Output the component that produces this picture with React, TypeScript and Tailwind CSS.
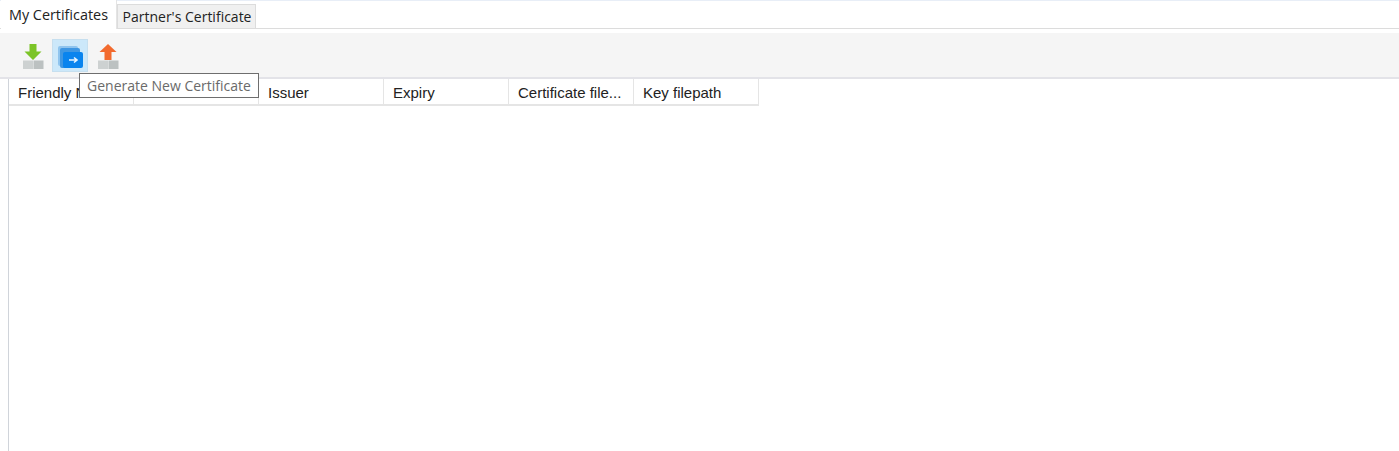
export default function App() {
  const heads = ["Friendly Name", "Domain", "Issuer", "Expiry", "Certificate file...", "Key filepath"];
  return (
    <div className="relative flex h-[451px] w-[1399px] flex-col overflow-hidden bg-white font-['Open_Sans',sans-serif]">
      <div className="h-px bg-[#e8eef7]" />
      <div className="flex h-[28px] items-end border-b border-[#dcdcdc] pl-[1px]">
        <div className="relative z-10 -mb-px flex h-[29px] w-[116px] items-center justify-center border-r border-[#e4e4e4] bg-white text-[14.4px] text-[#222]">
          My Certificates
        </div>
        <div className="flex h-[24px] w-[139px] items-center justify-center border border-b-0 border-[#dcdcdc] bg-[#f0f0f0] pl-[1px] text-[14px] text-[#222]">
          Partner's Certificate
        </div>
      </div>
      <div className="mt-[4px] flex h-[46px] items-start border-b-2 border-[#e3e3e8] bg-[#f5f5f5] pl-[15px] pt-[6px]">
        <button className="flex h-[33px] w-[36px] items-center justify-center">
          <svg width="24" height="30" viewBox="0 0 24 30">
            <path d="M8.500 3h7v7.500h5L12 19 3.500 10.500h5z" fill="#7cc427" />
            <rect x="2" y="19.500" width="10" height="8.500" fill="#cdd1d1" />
            <rect x="12.500" y="19.500" width="10" height="8.500" fill="#bcc1c1" />
          </svg>
        </button>
        <button className="ml-px flex h-[33px] w-[36px] items-center justify-center border border-[#c6dfef] bg-[#cce8fa]">
          <svg width="28" height="30" viewBox="0 0 28 30">
            <rect x="2" y="5" width="20" height="20" rx="2" fill="#8fc4ee" />
            <rect x="4" y="7" width="20" height="20" rx="2" fill="#3f97e3" />
            <rect x="7" y="11" width="20" height="16" rx="2" fill="#0a84ee" />
            <path d="M13 19h7M18 16.500l3 2.500-3 2.500" stroke="#e8f4ff" strokeWidth="1.600" fill="none" />
          </svg>
        </button>
        <button className="ml-px flex h-[33px] w-[38px] items-center justify-center">
          <svg width="24" height="30" viewBox="0 0 24 30">
            <path d="M12 3l8.500 8h-5v8h-7v-8h-5z" fill="#f26a2e" />
            <rect x="2" y="19.500" width="10" height="8.500" fill="#cdd1d1" />
            <rect x="12.500" y="19.500" width="10" height="8.500" fill="#bcc1c1" />
          </svg>
        </button>
      </div>
      <div className="ml-[8px] flex-1 border-l border-[#d0d4da]">
        <div className="flex h-[27px] w-[750px] border-b-2 border-[#e5e5e5] font-['Liberation_Sans',sans-serif] text-[15px] text-[#222]">
          {heads.map((h) => (
            <div key={h} className="flex w-[125px] shrink-0 items-center border-r border-[#e5e5e5] pl-[9px] pt-[3px] whitespace-nowrap">
              {h}
            </div>
          ))}
        </div>
      </div>
      <div className="absolute left-[79px] top-[73px] z-20 flex h-[25px] w-[180px] items-center justify-center border border-[#6e6e6e] bg-white text-[14px] text-[#6a6a6a]">
        Generate New Certificate
      </div>
    </div>
  );
}
